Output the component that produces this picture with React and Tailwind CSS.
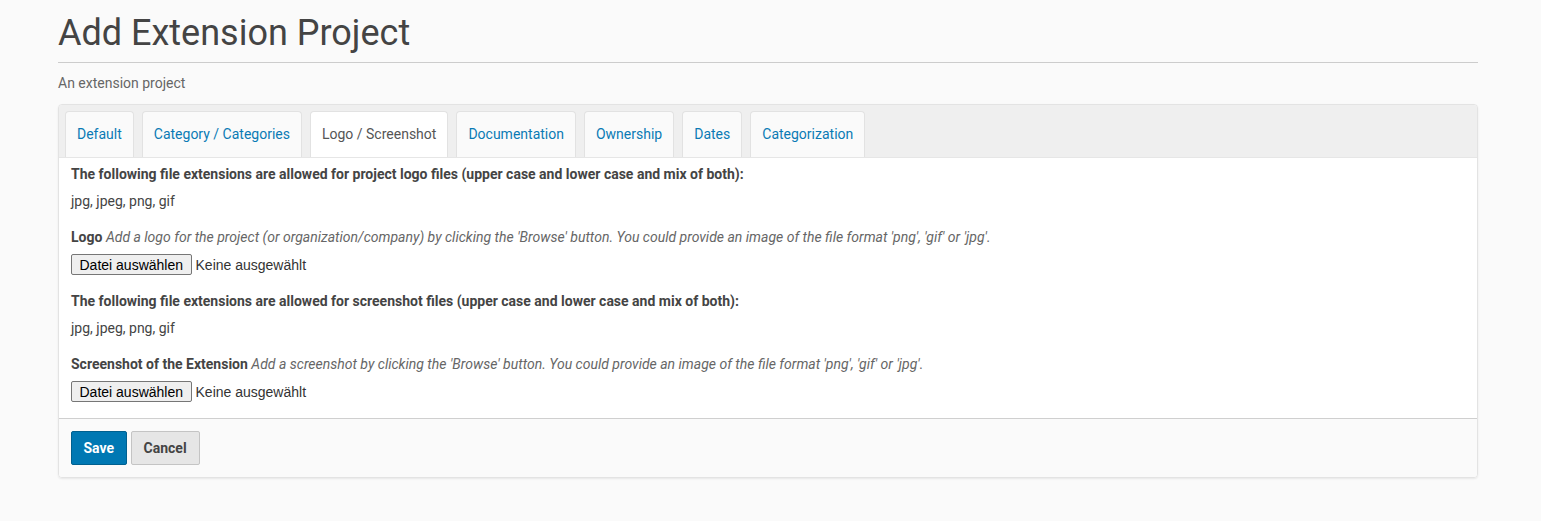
import React from "react";

const tabs = [
  "Default",
  "Category / Categories",
  "Logo / Screenshot",
  "Documentation",
  "Ownership",
  "Dates",
  "Categorization",
];

function FileInput() {
  return (
    <div className="mt-[7px] flex items-center h-[21px] font-['Liberation_Sans',Arial,sans-serif]">
      <button className="h-[21px] px-[7.5px] text-[14px] leading-none text-black bg-[#efefef] border border-[#767676] rounded-[2px]">
        Datei auswählen
      </button>
      <span className="ml-[4px] text-[14px] text-[#333]">Keine ausgewählt</span>
    </div>
  );
}

function App() {
  const active = "Logo / Screenshot";

  return (
    <div className="min-h-screen bg-[#fafafa] font-['Roboto',sans-serif] text-[#444]">
      <div className="ml-[58px] w-[1420px] pt-[12px]">
        {/* HEADER */}
        <h1 className="text-[36px] leading-[42px] font-normal text-[#444] pb-[8px] border-b border-[#cccccc]">
          Add Extension Project
        </h1>
        <p className="mt-[10px] text-[14px] leading-[20px] text-[#666]">
          An extension project
        </p>

        {/* CARD */}
        <div className="mt-[11px] border border-[#e3e3e3] rounded-[4px] shadow-[0_1px_2px_rgba(0,0,0,0.08)] overflow-hidden">
          {/* TABS */}
          <div className="bg-[#efefef] px-[6px] pt-[6px] flex gap-[8px] border-b border-[#e6e6e6]">
            {tabs.map((tab) => (
              <div
                key={tab}
                className={`h-[46px] px-[11px] flex items-center text-[14px] rounded-t-[4px] border border-b-0 border-[#e2e2e2] ${
                  tab === active
                    ? "bg-white text-[#555]"
                    : "bg-[#fafafa] text-[#0a7ab5]"
                }`}
              >
                {tab}
              </div>
            ))}
          </div>

          {/* BODY */}
          <div className="bg-white px-[12px] pt-[6px] pb-[16px] text-[14px] leading-[20px]">
            <p className="font-bold text-[#444]">
              The following file extensions are allowed for project logo files (upper case and lower case and mix of both):
            </p>
            <p className="mt-[7px] text-[#444]">jpg, jpeg, png, gif</p>
            <p className="mt-[16px]">
              <span className="font-bold">Logo</span>{" "}
              <span className="italic text-[#666]">
                Add a logo for the project (or organization/company) by clicking the 'Browse' button. You could provide an image of the file format 'png', 'gif' or 'jpg'.
              </span>
            </p>
            <FileInput />

            <p className="mt-[16px] font-bold text-[#444]">
              The following file extensions are allowed for screenshot files (upper case and lower case and mix of both):
            </p>
            <p className="mt-[7px] text-[#444]">jpg, jpeg, png, gif</p>
            <p className="mt-[16px]">
              <span className="font-bold">Screenshot of the Extension</span>{" "}
              <span className="italic text-[#666]">
                Add a screenshot by clicking the 'Browse' button. You could provide an image of the file format 'png', 'gif' or 'jpg'.
              </span>
            </p>
            <FileInput />
          </div>

          {/* FOOTER */}
          <div className="bg-[#fafafa] border-t border-[#cfcfcf] px-[12px] pt-[12px] pb-[12px] flex gap-[4px]">
            <button className="h-[34px] px-[11.5px] text-[14px] font-bold text-white bg-[#0078b3] border border-[#00608f] rounded-[2px]">
              Save
            </button>
            <button className="h-[34px] px-[12px] text-[14px] font-bold text-[#444] bg-[#e6e6e6] border border-[#c4c4c4] rounded-[2px]">
              Cancel
            </button>
          </div>
        </div>
      </div>
    </div>
  );
}

export default App;
